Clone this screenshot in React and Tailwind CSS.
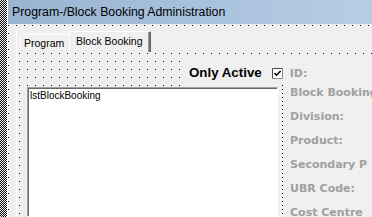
export default function App() {
  const labels = ["Block Booking", "Division:", "Product:", "Secondary P", "UBR Code:", "Cost Centre"];
  return (
    <div className="w-[372px] h-[217px] overflow-hidden flex bg-[#f0f0f0]">
      <div className="w-[7px] shrink-0 bg-[image:repeating-conic-gradient(#000_0_25%,#fff_0_50%)] bg-[length:2px_2px] bg-size-[2px_2px]" />
      <div className="flex-1 min-w-0 flex flex-col border-l border-white">
        <div className="h-[24px] shrink-0 bg-[linear-gradient(to_right,#99b4d1,#b6cde6)] pl-[4px] leading-[24px] text-[12.3px] text-black whitespace-nowrap font-['Liberation_Sans',Arial,sans-serif]">
          Program-/Block Booking Administration
        </div>
        <div className="flex-1 min-h-0 flex flex-col bg-[image:conic-gradient(at_1px_1px,transparent_270deg,#000_0)] bg-[length:8px_8px] bg-size-[8px_8px] bg-[position:0px_1px] bg-position-[0px_1px]">
          <div className="flex-1 min-h-0 ml-[8px] mt-[4px] border-l border-white bg-[#f0f0f0] flex flex-col">
            <div className="h-[24px] shrink-0 flex items-end pl-[3px] font-['Liberation_Sans',Arial,sans-serif] text-[10.5px] text-black whitespace-nowrap">
              <div className="w-[49px] h-[18px] border-t border-l border-white rounded-tl-[2px] pl-[3px] pt-[2px] leading-[12px]">
                Program
              </div>
              <div className="w-[82px] h-[21px] border-t border-l border-white border-r-2 border-r-[#696969] rounded-t-[2px] pl-[6px] pt-[3px] leading-[12px] shadow-[inset_-1px_0_0_#a0a0a0]">
                Block Booking
              </div>
            </div>
            <div className="flex-1 min-h-0 flex flex-col bg-[image:conic-gradient(at_1px_1px,transparent_270deg,#000_0)] bg-[length:8px_8px] bg-size-[8px_8px] bg-[position:2px_1px] bg-position-[2px_1px]">
              <div className="h-[34px] shrink-0 flex">
                <div className="w-[166px] shrink-0" />
                <div className="flex-1 mt-[5px] h-[29px] bg-[#f0f0f0] flex items-start pl-[6px] whitespace-nowrap">
                  <span className="mt-[9px] leading-[14px] text-[13.3px] font-bold text-black font-['Liberation_Sans',Arial,sans-serif]">
                    Only Active
                  </span>
                  <svg className="ml-[10px] mt-[11px] shrink-0" width="11" height="11" viewBox="0 0 11 11">
                    <rect x="0" y="0" width="11" height="11" fill="#fff" />
                    <path d="M0.5 10.5V0.5H10.5" fill="none" stroke="#4a4a4a" />
                    <path d="M10.5 0.5V10.5H0.5" fill="none" stroke="#8a8a8a" />
                    <path d="M2.5 5 L4.5 7.2 L8.6 3" fill="none" stroke="#000" strokeWidth="1.6" />
                  </svg>
                  <span className="ml-[7px] mt-[10px] leading-[14px] text-[11px] font-bold text-[#a0a0a0] font-['DejaVu_Sans',Verdana,sans-serif]">
                    ID:
                  </span>
                </div>
              </div>
              <div className="flex-1 min-h-0 flex">
                <div className="w-[265px] shrink-0 pl-[10px] pt-[1px] flex flex-col">
                  <div className="flex-1 w-[251px] border-t border-l border-t-[#a0a0a0] border-l-[#a0a0a0] border-r border-b border-r-white border-b-white flex flex-col">
                    <div className="flex-1 border-t border-l border-t-[#696969] border-l-[#696969] bg-white pl-[1px] pt-[1px] leading-[12px] text-[10px] text-black font-['Liberation_Sans',Arial,sans-serif]">
                      lstBlockBooking
                    </div>
                  </div>
                </div>
                <div className="flex-1 min-w-0 flex bg-[#f0f0f0]">
                  <div className="w-[1px] shrink-0 -mt-[1px] bg-[image:repeating-linear-gradient(to_bottom,#000_0_1px,transparent_1px_4px)]" />
                  <div className="flex flex-col gap-[10px] pl-[7px] whitespace-nowrap text-[11px] leading-[14px] font-bold text-[#a0a0a0] font-['DejaVu_Sans',Verdana,sans-serif]">
                    {labels.map((l) => (
                      <div key={l}>{l}</div>
                    ))}
                  </div>
                </div>
              </div>
            </div>
          </div>
        </div>
      </div>
    </div>
  );
}
